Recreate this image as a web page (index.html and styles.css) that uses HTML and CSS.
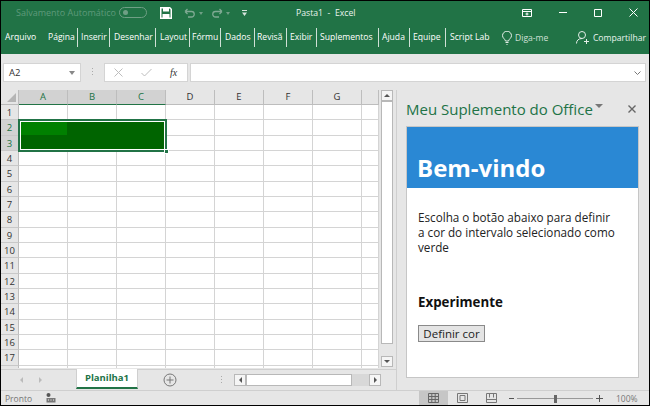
FILE: index.html
```html
<!DOCTYPE html>
<html lang="pt-BR">
<head>
<meta charset="utf-8">
<title>Pasta1 - Excel</title>
<link rel="stylesheet" href="styles.css">
</head>
<body>
<div class="window">
  <header class="titlebar">
    <div class="qat">
      <span class="autosave">Salvamento Automático</span>
      <span class="toggle"><i></i></span>
      <svg class="save" width="12" height="12" viewBox="0 0 12 12"><path d="M.75.75h9l1.500 1.500v9h-10.500z" fill="none" stroke="#fff" stroke-width="1.500"/><path d="M3 1h6v3.500H3zM2.500 7h7v4h-7z" fill="#fff"/></svg>
      <svg class="undo" width="12" height="10" viewBox="0 0 12 10"><path d="M1 3.500h6.500a2.750 2.750 0 0 1 0 5.500H4M1 3.500l2.500-2.500M1 3.500l2.500 2.500" fill="none" stroke="#7fa993" stroke-width="1.300"/></svg>
      <span class="caret"></span>
      <svg class="redo" width="12" height="10" viewBox="0 0 12 10"><path d="M11 3.500H4.500a2.750 2.750 0 0 0 0 5.500H8M11 3.500l-2.500-2.500M11 3.500l-2.500 2.500" fill="none" stroke="#7fa993" stroke-width="1.300"/></svg>
      <span class="caret"></span>
      <svg class="custom" width="5" height="6" viewBox="0 0 5 6"><path d="M0 0h5v1H0zM0 2.500h5L2.500 6z" fill="#d6e4dc"/></svg>
    </div>
    <div class="doc">Pasta1&nbsp; -&nbsp; Excel</div>
    <div class="winctl">
      <svg width="10" height="8" viewBox="0 0 10 8"><path d="M.5.500h9v7h-9zM.5 2.500h9M5 3.500v3M3.500 5h3" fill="none" stroke="#fff"/></svg>
      <svg width="8" height="1" viewBox="0 0 8 1"><path d="M0 .5h8" stroke="#fff"/></svg>
      <svg width="8" height="8" viewBox="0 0 8 8"><path d="M.5.500h7v7h-7z" fill="none" stroke="#fff"/></svg>
      <svg width="9" height="9" viewBox="0 0 9 9"><path d="M.5.500l8 8M8.500.500l-8 8" stroke="#fff"/></svg>
    </div>
  </header>
  <nav class="ribbon">
    <span class="tab t-arquivo">Arquivo</span>
    <span class="tab t-pagina">Página</span>
    <span class="tab t-inserir">Inserir</span>
    <span class="tab t-desenhar">Desenhar</span>
    <span class="tab t-layout">Layout</span>
    <span class="tab t-formu">Fórmu</span>
    <span class="tab t-dados">Dados</span>
    <span class="tab t-revisa">Revisã</span>
    <span class="tab t-exibir">Exibir</span>
    <span class="tab t-suple">Suplementos</span>
    <span class="tab t-ajuda">Ajuda</span>
    <span class="tab t-equipe">Equipe</span>
    <span class="tab t-script">Script Lab</span>
    <span class="tell">
      <svg width="10" height="14" viewBox="0 0 10 14"><path d="M3.500 10C3 8 .5 7 .5 4.700a4.500 4.500 0 0 1 9 0C9.500 7 7 8 6.500 10zM3.500 11.500h3M4.500 13.500h1" fill="none" stroke="#e4eee8"/></svg>
      Diga-me
    </span>
    <span class="share">
      <svg width="13" height="13" viewBox="0 0 13 13"><circle cx="6" cy="4" r="3.500" fill="none" stroke="#e4eee8"/><path d="M.5 12.500c0-3 2-5 5.500-5M8 10.500h5M10.500 8v5" fill="none" stroke="#e4eee8"/></svg>
      Compartilhar
    </span>
  </nav>
  <section class="formula">
    <div class="namebox"><span>A2</span><i class="down"></i></div>
    <span class="dots"></span>
    <div class="fbuttons">
      <svg width="9" height="9" viewBox="0 0 9 9"><path d="M.5.500l8 8M8.500.500l-8 8" stroke="#bdbdbd"/></svg>
      <svg width="11" height="9" viewBox="0 0 11 9"><path d="M.5 5l3 3 7-7" fill="none" stroke="#bdbdbd"/></svg>
      <em>fx</em>
    </div>
    <div class="finput"><svg width="7" height="4" viewBox="0 0 7 4"><path d="M.5.500l3 3 3-3" fill="none" stroke="#777"/></svg></div>
  </section>
  <main class="body">
    <section class="sheetarea">
      <div class="sheetrow">
        <div class="grid">
          <div class="corner"><i></i></div>
          <div class="ch on">A</div><div class="ch on">B</div><div class="ch on">C</div><div class="ch">D</div><div class="ch">E</div><div class="ch">F</div><div class="ch">G</div><div class="ch"></div>
          <div class="rh">1</div><div class="c"></div><div class="c"></div><div class="c"></div><div class="c"></div><div class="c"></div><div class="c"></div><div class="c"></div><div class="c"></div>
          <div class="rh on">2</div><div class="c"></div><div class="c"></div><div class="c"></div><div class="c"></div><div class="c"></div><div class="c"></div><div class="c"></div><div class="c"></div>
          <div class="rh on">3</div><div class="c"></div><div class="c"></div><div class="c"></div><div class="c"></div><div class="c"></div><div class="c"></div><div class="c"></div><div class="c"></div>
          <div class="rh">4</div><div class="c"></div><div class="c"></div><div class="c"></div><div class="c"></div><div class="c"></div><div class="c"></div><div class="c"></div><div class="c"></div>
          <div class="rh">5</div><div class="c"></div><div class="c"></div><div class="c"></div><div class="c"></div><div class="c"></div><div class="c"></div><div class="c"></div><div class="c"></div>
          <div class="rh">6</div><div class="c"></div><div class="c"></div><div class="c"></div><div class="c"></div><div class="c"></div><div class="c"></div><div class="c"></div><div class="c"></div>
          <div class="rh">7</div><div class="c"></div><div class="c"></div><div class="c"></div><div class="c"></div><div class="c"></div><div class="c"></div><div class="c"></div><div class="c"></div>
          <div class="rh">8</div><div class="c"></div><div class="c"></div><div class="c"></div><div class="c"></div><div class="c"></div><div class="c"></div><div class="c"></div><div class="c"></div>
          <div class="rh">9</div><div class="c"></div><div class="c"></div><div class="c"></div><div class="c"></div><div class="c"></div><div class="c"></div><div class="c"></div><div class="c"></div>
          <div class="rh">10</div><div class="c"></div><div class="c"></div><div class="c"></div><div class="c"></div><div class="c"></div><div class="c"></div><div class="c"></div><div class="c"></div>
          <div class="rh">11</div><div class="c"></div><div class="c"></div><div class="c"></div><div class="c"></div><div class="c"></div><div class="c"></div><div class="c"></div><div class="c"></div>
          <div class="rh">12</div><div class="c"></div><div class="c"></div><div class="c"></div><div class="c"></div><div class="c"></div><div class="c"></div><div class="c"></div><div class="c"></div>
          <div class="rh">13</div><div class="c"></div><div class="c"></div><div class="c"></div><div class="c"></div><div class="c"></div><div class="c"></div><div class="c"></div><div class="c"></div>
          <div class="rh">14</div><div class="c"></div><div class="c"></div><div class="c"></div><div class="c"></div><div class="c"></div><div class="c"></div><div class="c"></div><div class="c"></div>
          <div class="rh">15</div><div class="c"></div><div class="c"></div><div class="c"></div><div class="c"></div><div class="c"></div><div class="c"></div><div class="c"></div><div class="c"></div>
          <div class="rh">16</div><div class="c"></div><div class="c"></div><div class="c"></div><div class="c"></div><div class="c"></div><div class="c"></div><div class="c"></div><div class="c"></div>
          <div class="rh">17</div><div class="c"></div><div class="c"></div><div class="c"></div><div class="c"></div><div class="c"></div><div class="c"></div><div class="c"></div><div class="c"></div>
          <div class="rh"></div><div class="c"></div><div class="c"></div><div class="c"></div><div class="c"></div><div class="c"></div><div class="c"></div><div class="c"></div><div class="c"></div>
          <div class="selection"><i class="fillA2"></i><i class="handle"></i></div>
        </div>
        <div class="vscroll">
          <span class="sbtn"><i class="up"></i></span>
          <span class="vthumb"></span>
          <span class="sbtn"><i class="dn"></i></span>
        </div>
      </div>
      <div class="tabsrow">
        <span class="nav"><i class="lf"></i><i class="rt"></i></span>
        <span class="sheettab">Planilha1</span>
        <svg class="plus" width="14" height="14" viewBox="0 0 14 14"><circle cx="7" cy="7" r="6" fill="none" stroke="#777"/><path d="M3.500 7h7M7 3.500v7" stroke="#777"/></svg>
        <span class="hdots"></span>
        <div class="hscroll">
          <span class="sbtn"><i class="lf"></i></span>
          <span class="hthumb"></span>
          <span class="sbtn"><i class="rt"></i></span>
        </div>
      </div>
    </section>
    <aside class="pane">
      <div class="panehead">
        <span class="panetitle">Meu Suplemento do Office</span>
        <i class="panecaret"></i>
        <svg class="paneclose" width="8" height="8" viewBox="0 0 8 8"><path d="M.5.500l7 7M7.500.500l-7 7" stroke="#666" stroke-width="1.400"/></svg>
      </div>
      <div class="panebox">
        <div class="banner"><h1>Bem-vindo</h1></div>
        <p class="intro">Escolha o botão abaixo para definir<br>a cor do intervalo selecionado como<br>verde</p>
        <h2>Experimente</h2>
        <button class="setcolor">Definir cor</button>
      </div>
    </aside>
  </main>
  <footer class="status">
    <span class="ready">Pronto</span>
    <svg class="macro" width="10" height="10" viewBox="0 0 10 10"><circle cx="2.500" cy="2" r="2" fill="#555"/><path d="M.5 5h9v4.500H.5z" fill="#777"/><path d="M2 7h1M4.500 7h1M7 7h1" stroke="#eee"/></svg>
    <span class="views">
      <span class="view active"><svg width="11" height="10" viewBox="0 0 11 10"><path d="M.5.500h10v9H.5zM.5 3.500h10M.5 6.500h10M3.800.500v9M7.200.500v9" fill="none" stroke="#666"/></svg></span>
      <span class="view"><svg width="11" height="10" viewBox="0 0 11 10"><path d="M.5.500h10v9H.5z" fill="none" stroke="#777"/><path d="M3 2.500h5v5H3z" fill="none" stroke="#777"/></svg></span>
      <span class="view"><svg width="11" height="10" viewBox="0 0 11 10"><path d="M.5.500h10v9H.5zM.5 6.500h10M3.500.500v4M7.500.500v4" fill="none" stroke="#777"/></svg></span>
    </span>
    <span class="zoom">
      <i class="minus"></i>
      <span class="slider"><i></i></span>
      <svg width="7" height="7" viewBox="0 0 7 7"><path d="M0 3.500h7M3.500 0v7" stroke="#555"/></svg>
    </span>
    <span class="pct">100%</span>
  </footer>
</div>
</body>
</html>
```

FILE: styles.css
```css
* { box-sizing: border-box; }
html, body { margin: 0; padding: 0; }
body { width: 650px; height: 406px; overflow: hidden; background: #000; font-family: "Open Sans", "Noto Sans", sans-serif; }
.window { width: 648px; height: 404px; margin: 1px 1px 0 1px; background: #e6e6e6; display: flex; flex-direction: column; overflow: hidden; }

.titlebar { height: 23px; background: #217346; color: #fff; display: flex; align-items: center; flex: none; position: relative; }
.qat { display: flex; align-items: center; padding-left: 15px; }
.autosave { font-size: 9px; color: #5f9a7b; white-space: nowrap; width: 103px; }
.toggle { width: 28px; height: 11px; border: 1px solid #6f9f85; border-radius: 6px; display: flex; align-items: center; padding-left: 3px; }
.toggle i { width: 5px; height: 5px; border-radius: 50%; background: #6f9f85; }
.save { margin-left: 13px; }
.undo { margin-left: 12px; }
.redo { margin-left: 8px; }
.caret { width: 0; height: 0; border: 2px solid transparent; border-top: 3px solid #6f9f85; margin: 3px 0 0 3px; }
.custom { margin-left: 12px; }
.doc { position: absolute; left: 295px; font-size: 8.7px; color: #eaf3ee; white-space: nowrap; }
.winctl { margin-left: auto; display: flex; align-items: center; gap: 27px; padding-right: 11px; }

.ribbon { height: 30px; background: #217346; flex: none; display: flex; align-items: flex-start; padding-top: 4px; font-size: 8.6px; color: #fff; white-space: nowrap; }
.tab { flex: none; height: 19px; line-height: 19px; padding-left: 3px; border-right: 1px solid #cfe0d6; overflow: hidden; }
.t-arquivo { width: 46px; padding-left: 4px; border-right: 0; }
.t-pagina { width: 31px; padding-left: 1px; }
.t-inserir { width: 32px; }
.t-desenhar { width: 46px; padding-left: 4px; }
.t-layout { width: 34px; padding-left: 4px; }
.t-formu { width: 31px; padding-left: 2px; }
.t-dados { width: 34px; padding-left: 4px; }
.t-revisa { width: 32px; padding-left: 2px; }
.t-exibir { width: 30px; }
.t-suple { width: 62px; }
.t-ajuda { width: 31px; }
.t-equipe { width: 36px; }
.t-script { width: 55px; padding-left: 4px; border-right: 0; }
.tell { margin-left: 1px; display: inline-flex; align-items: center; gap: 3px; color: #d0e0d7; height: 19px; }
.share { margin-left: auto; margin-right: 3px; display: inline-flex; align-items: center; gap: 4px; color: #eaf3ee; height: 19px; }

.formula { height: 36px; flex: none; display: flex; align-items: center; padding: 1px 3px 0 2px; }
.namebox { width: 78px; height: 19px; background: #fff; border: 1px solid #d4d4d4; display: flex; align-items: center; justify-content: space-between; padding: 0 5px; font-size: 9.5px; color: #333; }
.down { width: 0; height: 0; border: 3px solid transparent; border-top: 4px solid #888; margin-top: 3px; }
.dots { width: 1px; height: 9px; margin: 0 11px 0 11px; background: repeating-linear-gradient(#aaa 0 1px, transparent 1px 3px); }
.fbuttons { width: 84px; height: 19px; background: #fff; border: 1px solid #d4d4d4; display: flex; align-items: center; gap: 18px; padding-left: 9px; margin-right: 2px; }
.fbuttons em { font: italic 10px "Liberation Serif", serif; color: #333; }
.finput { flex: 1; height: 19px; background: #fff; border: 1px solid #d4d4d4; display: flex; align-items: center; justify-content: flex-end; padding-right: 4px; }

.body { flex: 1; display: flex; min-height: 0; }
.sheetarea { width: 396px; flex: none; display: flex; flex-direction: column; border-right: 1px solid #cfcfcf; }
.sheetrow { flex: 1; display: flex; min-height: 0; }

.grid { position: relative; width: 378px; height: 278px; flex: none; background: #fff; display: grid; grid-template-columns: 18px repeat(7, 49px) 17px; grid-template-rows: 15px; grid-auto-rows: 15.34px; overflow: hidden; }
.corner { background: #e6e6e6; border-right: 1px solid #bbb; border-bottom: 1px solid #bbb; position: relative; }
.corner i { position: absolute; right: 2px; bottom: 2px; width: 0; height: 0; border-left: 9px solid transparent; border-bottom: 9px solid #b5b5b5; }
.ch { background: #e6e6e6; border-right: 1px solid #bdbdbd; border-bottom: 1px solid #bdbdbd; font-size: 9.5px; line-height: 14px; text-align: center; color: #333; }
.ch.on { background: #d2d2d2; color: #217346; border-bottom: 1px solid #217346; }
.rh { background: #e6e6e6; border-right: 1px solid #bdbdbd; border-bottom: 1px solid #c8c8c8; font-size: 9.5px; line-height: 15px; text-align: center; color: #333; }
.rh.on { background: #d2d2d2; color: #217346; border-right: 1px solid #217346; }
.c { border-right: 1px solid #d4d4d4; border-bottom: 1px solid #d4d4d4; }

.selection { position: absolute; left: 17px; top: 29px; width: 149px; height: 33px; background: #006400; border: 2px solid #217346; outline: 1px solid #fff; outline-offset: -3px; }
.fillA2 { position: absolute; left: 1px; top: 1px; width: 46px; height: 13px; background: #008000; }
.handle { position: absolute; right: -4px; bottom: -4px; width: 5px; height: 5px; background: #217346; border: 1px solid #fff; }

.vscroll { width: 12px; margin-left: 2px; height: 277px; background: #e6e6e6; display: flex; flex-direction: column; }
.sbtn { flex: none; width: 12px; height: 11px; background: #f5f5f5; border: 1px solid #b8b8b8; display: flex; align-items: center; justify-content: center; }
.vthumb { height: 243px; background: #fff; border: 1px solid #b8b8b8; margin-bottom: auto; width: 100%; }
.up { width: 0; height: 0; border: 3px solid transparent; border-bottom: 3px solid #555; margin-top: -3px; }
.dn { width: 0; height: 0; border: 3px solid transparent; border-top: 3px solid #555; margin-bottom: -3px; }
.lf { width: 0; height: 0; border: 3px solid transparent; border-right: 3px solid #555; margin-left: -3px; }
.rt { width: 0; height: 0; border: 3px solid transparent; border-left: 3px solid #555; margin-right: -3px; }

.tabsrow { height: 21px; flex: none; display: flex; align-items: center; border-top: 1px solid #cfcfcf; position: relative; }
.nav { width: 75px; display: flex; gap: 16px; padding-left: 19px; }
.nav .lf { border-right-color: #bbb; }
.nav .rt { border-left-color: #bbb; }
.sheettab { width: 62px; height: 20px; margin-top: -2px; background: #fff; border-bottom: 2px solid #217346; border-left: 1px solid #cfcfcf; border-right: 1px solid #cfcfcf; font-size: 9.5px; font-weight: 700; color: #217346; line-height: 18px; text-align: center; }
.plus { margin-left: 25px; }
.hdots { width: 1px; height: 9px; margin-left: 44px; background: repeating-linear-gradient(#aaa 0 1px, transparent 1px 3px); }
.hscroll { margin-left: 12px; width: 147px; height: 12px; display: flex; background: #d8d8d8; }
.hscroll .sbtn { height: 12px; }
.hthumb { width: 106px; background: #fff; border: 1px solid #b8b8b8; margin-right: auto; }

.pane { flex: 1; padding: 0 10px 0 9px; display: flex; flex-direction: column; min-width: 0; }
.panehead { height: 36px; flex: none; display: flex; align-items: center; padding-top: 2px; }
.panetitle { font-size: 15px; color: #217346; white-space: nowrap; font-family: "Open Sans", sans-serif; }
.panecaret { width: 0; height: 0; border: 4px solid transparent; border-top: 4px solid #777; margin: -2px 0 0 2px; }
.paneclose { margin-left: auto; margin-right: 3px; margin-top: -1px; }
.panebox { flex: none; height: 252px; background: #fff; border: 1px solid #c6c6c6; }
.banner { height: 61px; background: #2a88d4; padding: 24px 0 0 10px; }
.banner h1 { margin: 0; font-size: 24px; line-height: 34px; font-weight: 700; color: #fff; font-family: "Open Sans", sans-serif; }
.intro { margin: 22px 0 0 11px; font-size: 11.7px; line-height: 15px; color: #222; }
h2 { margin: 37px 0 0 11px; font-size: 13.3px; line-height: 20px; font-weight: 700; color: #111; }
.setcolor { display: block; margin: 13px 0 0 11px; width: 67px; height: 17px; padding: 0; background: #e4e4e4; border: 1px solid #8a8a8a; font-size: 11.5px; line-height: 15px; font-family: "Open Sans", sans-serif; color: #222; }

.status { height: 15px; flex: none; display: flex; align-items: center; border-top: 1px solid #cfcfcf; font-size: 8.5px; color: #777; }
.ready { margin-left: 4px; width: 41px; }
.views { margin-left: 363px; display: flex; height: 15px; }
.view { width: 29px; display: flex; align-items: center; justify-content: center; }
.view.active { background: #c6c6c6; }
.zoom { display: flex; align-items: center; margin-left: 3px; }
.minus { width: 5px; height: 1px; background: #555; }
.slider { position: relative; width: 76px; height: 1px; background: #999; margin: 0 3px; }
.slider i { position: absolute; left: 37px; top: -3px; width: 3px; height: 8px; background: #666; }
.pct { margin-left: 13px; font-size: 8.5px; }
```
